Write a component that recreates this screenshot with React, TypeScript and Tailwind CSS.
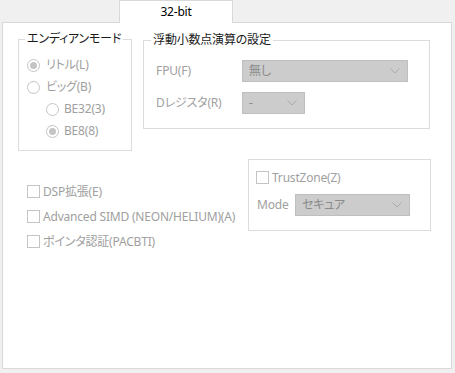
import React from "react";

const font = "font-['Noto_Sans','Noto_Sans_CJK_JP',sans-serif] [font-feature-settings:'palt'] tracking-[-0.2px]";

function Radio({ checked }: { checked?: boolean }) {
  return (
    <span className="w-[13px] h-[13px] rounded-full border border-[#c4c4c4] bg-white flex items-center justify-center shrink-0">
      {checked && <span className="w-[7px] h-[7px] rounded-full bg-[#c4c4c4]" />}
    </span>
  );
}

function Check() {
  return <span className="w-[13px] h-[13px] border border-[#c4c4c4] bg-white shrink-0" />;
}

function Chevron() {
  return (
    <svg width="10" height="6" viewBox="0 0 10 6" className="shrink-0">
      <path d="M0.5 0.5 L5 5 L9.5 0.5" fill="none" stroke="#ababab" strokeWidth="1" />
    </svg>
  );
}

function Select({ value, w }: { value: string; w: string }) {
  return (
    <div className={`${w} h-[22px] bg-[#cccccc] border border-[#bfbfbf] flex items-center justify-between pl-[6px] pr-[7px] text-[#8a8a8a]`}>
      <span className="whitespace-nowrap">{value}</span>
      <Chevron />
    </div>
  );
}

export default function App() {
  return (
    <div className={`w-[455px] h-[373px] bg-[#f0f0f0] text-[12px] leading-[16px] ${font}`}>
      <div className="relative z-10 ml-[119px] w-[114px] h-[23px] bg-white border-t border-l border-r border-[#d9d9d9] flex items-center justify-center text-black">
        32-bit
      </div>
      <div className="-mt-px ml-[2px] w-[450px] h-[347px] bg-white border border-[#d9d9d9] pt-[8px] pl-[15px]">
        <div className="flex items-start">
          <fieldset className="w-[114px] h-[120px] border border-[#dcdcdc] px-[8px]">
            <legend className="-ml-[2px] px-[2px] text-[#1a1a1a] whitespace-nowrap">エンディアンモード</legend>
            <div className="flex flex-col pt-[7px] text-[#a0a0a0]">
              <div className="h-[22px] flex items-center gap-[6px]">
                <Radio checked />
                <span className="whitespace-nowrap">リトル(L)</span>
              </div>
              <div className="h-[22px] flex items-center gap-[6px]">
                <Radio />
                <span className="whitespace-nowrap">ビッグ(B)</span>
              </div>
              <div className="h-[22px] flex items-center gap-[5px] pl-[19px]">
                <Radio />
                <span className="whitespace-nowrap">BE32(3)</span>
              </div>
              <div className="h-[22px] flex items-center gap-[5px] pl-[19px]">
                <Radio checked />
                <span className="whitespace-nowrap">BE8(8)</span>
              </div>
            </div>
          </fieldset>
          <fieldset className="ml-[11px] mt-[1px] w-[287px] h-[97px] border border-[#dcdcdc] pl-[12px]">
            <legend className="-ml-[5px] px-[2px] text-[#1a1a1a] whitespace-nowrap">浮動小数点演算の設定</legend>
            <div className="flex flex-col gap-[10px] pt-[12px] text-[#a0a0a0]">
              <div className="h-[22px] flex items-center">
                <span className="w-[86px] whitespace-nowrap">FPU(F)</span>
                <Select value="無し" w="w-[166px]" />
              </div>
              <div className="h-[22px] flex items-center">
                <span className="w-[86px] whitespace-nowrap">Dレジスタ(R)</span>
                <Select value="-" w="w-[63px]" />
              </div>
            </div>
          </fieldset>
        </div>
        <div className="flex items-start mt-[8px]">
          <div className="ml-[9px] w-[221px] pt-[26px] flex flex-col gap-[12px] text-[#a0a0a0]">
            <div className="h-[13px] flex items-center gap-[3px]">
              <Check />
              <span className="whitespace-nowrap">DSP拡張(E)</span>
            </div>
            <div className="h-[13px] flex items-center gap-[3px]">
              <Check />
              <span className="whitespace-nowrap">Advanced SIMD (NEON/HELIUM)(A)</span>
            </div>
            <div className="h-[13px] flex items-center gap-[3px]">
              <Check />
              <span className="whitespace-nowrap">ポインタ認証(PACBTI)</span>
            </div>
          </div>
          <div className="w-[183px] h-[72px] border border-[#dcdcdc] pl-[7px] pt-[11px] text-[#a0a0a0]">
            <div className="h-[13px] flex items-center gap-[3px]">
              <Check />
              <span className="whitespace-nowrap">TrustZone(Z)</span>
            </div>
            <div className="mt-[10px] h-[22px] flex items-center">
              <span className="w-[39px] pl-[1px]">Mode</span>
              <Select value="セキュア" w="w-[115px]" />
            </div>
          </div>
        </div>
      </div>
    </div>
  );
}
